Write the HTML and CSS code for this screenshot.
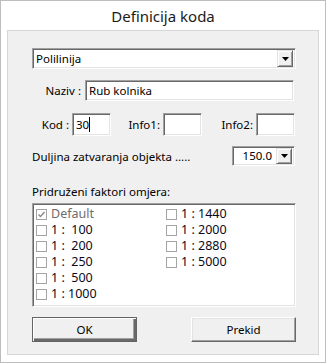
FILE: index.html
```html
<!DOCTYPE html>
<html>
<head>
<meta charset="utf-8">
<link rel="stylesheet" href="styles.css">
</head>
<body>
<div class="window">
  <div class="title">Definicija koda</div>
  <div class="panel">
    <div class="combo wide">
      <span class="combo-text">Polilinija</span>
      <span class="dd"><svg width="7" height="4" viewBox="0 0 7 4"><path d="M0 0H7L3.5 4Z" fill="#000"/></svg></span>
    </div>
    <div class="row naziv">
      <span class="lab l-naziv">Naziv :</span>
      <div class="field f-naziv">Rub kolnika</div>
    </div>
    <div class="row kod">
      <span class="lab l-kod">Kod :</span>
      <div class="field f-small"><span>30</span><span class="caret"></span></div>
      <span class="lab l-info1">Info1:</span>
      <div class="field f-small"></div>
      <span class="lab l-info2">Info2:</span>
      <div class="field f-small"></div>
    </div>
    <div class="row duljina">
      <span class="lab l-duljina">Duljina zatvaranja objekta .....</span>
      <div class="combo small">
        <span class="combo-text">150.0</span>
        <span class="dd"><svg width="7" height="4" viewBox="0 0 7 4"><path d="M0 0H7L3.5 4Z" fill="#000"/></svg></span>
      </div>
    </div>
    <div class="group-label">Pridruženi faktori omjera:</div>
    <div class="list">
      <div class="item disabled"><span class="cb checked"><svg width="9" height="9" viewBox="0 0 9 9"><path d="M1.5 4.5L3.5 6.5L7.5 2" fill="none" stroke="#8a8a8a" stroke-width="1.4"/></svg></span><span>Default</span></div>
      <div class="item"><span class="cb"></span><span>1 :  100</span></div>
      <div class="item"><span class="cb"></span><span>1 :  200</span></div>
      <div class="item"><span class="cb"></span><span>1 :  250</span></div>
      <div class="item"><span class="cb"></span><span>1 :  500</span></div>
      <div class="item"><span class="cb"></span><span>1 : 1000</span></div>
      <div class="item"><span class="cb"></span><span>1 : 1440</span></div>
      <div class="item"><span class="cb"></span><span>1 : 2000</span></div>
      <div class="item"><span class="cb"></span><span>1 : 2880</span></div>
      <div class="item"><span class="cb"></span><span>1 : 5000</span></div>
    </div>
    <div class="buttons">
      <div class="btn default">OK</div>
      <div class="btn">Prekid</div>
    </div>
  </div>
</div>
</body>
</html>
```

FILE: styles.css
```css
html, body {
  margin: 0;
  padding: 0;
  background: #ffffff;
}
.window {
  box-sizing: border-box;
  width: 326px;
  height: 363px;
  border: 1px solid #bdbdbd;
  background: #ffffff;
  font-family: "Noto Sans", "DejaVu Sans", sans-serif;
  font-size: 11.5px;
  color: #000;
}
.title {
  height: 29px;
  line-height: 30px;
  text-align: center;
  font-size: 15px;
  color: #1a1a1a;
}
.panel {
  box-sizing: border-box;
  margin-left: 6px;
  width: 312px;
  height: 325px;
  border: 1px solid #d6d6d6;
  background: #f0f0f0;
  padding: 17px 0 0 24px;
  display: flex;
  flex-direction: column;
}
.combo {
  box-sizing: border-box;
  display: flex;
  align-items: center;
  background: #fff;
  border-top: 1px solid #a0a0a0;
  border-left: 1px solid #a0a0a0;
  border-right: 1px solid #ffffff;
  border-bottom: 1px solid #ffffff;
  box-shadow: inset 1px 1px 0 #696969, inset -1px -1px 0 #e3e3e3;
  padding: 2px;
}
.combo-text {
  flex: 1;
  padding-left: 1px;
  line-height: 16px;
}
.wide {
  width: 264px;
  height: 21px;
}
.dd {
  box-sizing: border-box;
  width: 16px;
  height: 17px;
  background: #f0f0f0;
  border-top: 1px solid #e3e3e3;
  border-left: 1px solid #e3e3e3;
  border-right: 1px solid #696969;
  border-bottom: 1px solid #696969;
  box-shadow: inset 1px 1px 0 #ffffff, inset -1px -1px 0 #a0a0a0;
  display: flex;
  align-items: center;
  justify-content: center;
}
.row {
  display: flex;
  align-items: center;
}
.lab {
  box-sizing: border-box;
  white-space: pre;
  text-align: right;
  padding-right: 3px;
}
.field {
  box-sizing: border-box;
  background: #fff;
  border-top: 1px solid #a0a0a0;
  border-left: 1px solid #a0a0a0;
  border-right: 1px solid #ffffff;
  border-bottom: 1px solid #ffffff;
  box-shadow: inset 1px 1px 0 #696969, inset -1px -1px 0 #e3e3e3;
  padding: 0 3px;
  display: flex;
  align-items: center;
}
.naziv {
  margin-top: 11px;
}
.l-naziv {
  width: 53px;
  padding-right: 4px;
}
.f-naziv {
  width: 209px;
  height: 21px;
}
.kod {
  margin-top: 12px;
}
.l-kod {
  width: 40px;
}
.l-info1 {
  width: 52px;
}
.l-info2 {
  width: 54px;
}
.f-small {
  width: 39px;
  height: 23px;
}
.caret {
  display: inline-block;
  width: 1px;
  height: 15px;
  background: #000;
}
.duljina {
  margin-top: 10px;
}
.l-duljina {
  width: 200px;
  text-align: left;
}
.small {
  width: 63px;
  height: 20px;
  padding: 1px 2px;
}
.small .combo-text {
  text-align: right;
  padding-right: 4px;
}
.small .dd {
  height: 16px;
}
.group-label {
  margin-top: 18px;
  line-height: 16px;
  height: 19px;
}
.list {
  box-sizing: border-box;
  width: 264px;
  height: 104px;
  background: #fff;
  border-top: 1px solid #a0a0a0;
  border-left: 1px solid #a0a0a0;
  border-right: 1px solid #ffffff;
  border-bottom: 1px solid #ffffff;
  box-shadow: inset 1px 1px 0 #696969, inset -1px -1px 0 #e3e3e3;
  padding: 2px 0 0 3px;
  display: grid;
  grid-template-rows: repeat(6, 16px);
  grid-template-columns: 130px 1fr;
  grid-auto-flow: column;
}
.item {
  display: flex;
  align-items: center;
  white-space: pre;
  font-size: 12.5px;
  line-height: 16px;
  height: 16px;
  color: #0a0a1e;
}
.item.disabled {
  color: #6d6d6d;
}
.cb {
  box-sizing: border-box;
  width: 11px;
  height: 11px;
  border: 1px solid #a4a4a4;
  background: #fff;
  margin-right: 4px;
  display: flex;
  align-items: center;
  justify-content: center;
}
.buttons {
  margin-top: 10px;
  width: 264px;
  display: flex;
  justify-content: space-between;
}
.btn {
  box-sizing: border-box;
  width: 105px;
  height: 25px;
  background: #f0f0f0;
  border-top: 1px solid #ffffff;
  border-left: 1px solid #ffffff;
  border-right: 1px solid #696969;
  border-bottom: 1px solid #696969;
  box-shadow: inset -1px -1px 0 #a0a0a0, inset 1px 1px 0 #e3e3e3;
  display: flex;
  align-items: center;
  justify-content: center;
}
.btn.default {
  border: 1px solid #646464;
  box-shadow: inset 1px 1px 0 #ffffff, inset -2px -2px 0 #696969, inset -3px -3px 0 #a0a0a0;
}
```
